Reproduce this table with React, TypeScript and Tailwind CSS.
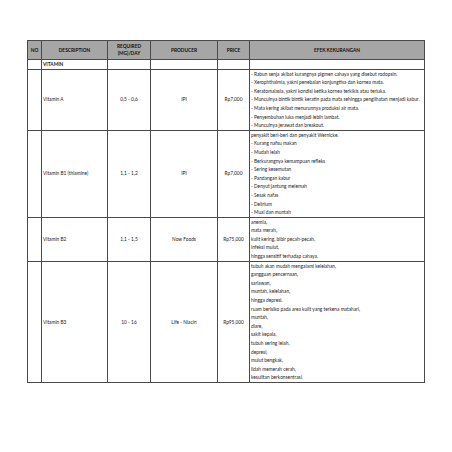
const efekA = [
  "- Rabun senja akibat kurangnya pigmen cahaya yang disebut rodopsin.",
  "- Xerophthalmia, yakni penebalan konjungtiva dan kornea mata.",
  "- Keratomalasia, yakni kondisi ketika kornea terkikis atau terluka.",
  "- Munculnya bintik bintik keratin pada mata sehingga penglihatan menjadi kabur.",
  "- Mata kering akibat menurunnya produksi air mata.",
  "- Penyembuhan luka menjadi lebih lambat.",
  "- Munculnya jerawat dan breakout.",
]

const efekB1 = [
  "penyakit beri-beri dan penyakit Wernicke.",
  "- Kurang nafsu makan",
  "- Mudah lelah",
  "- Berkurangnya kemampuan refleks",
  "- Sering kesemutan",
  "- Pandangan kabur",
  "- Denyut jantung melemah",
  "- Sesak nafas",
  "- Delirium",
  "- Mual dan muntah",
]

const efekB2 = [
  "anemia,",
  "mata merah,",
  "kulit kering, bibir pecah-pecah,",
  "infeksi mulut,",
  "hingga sensitif terhadap cahaya.",
]

const efekB3 = [
  "tubuh akan mudah mengalami kelelahan,",
  "gangguan pencernaan,",
  "sariawan,",
  "muntah, kelelahan,",
  "hingga depresi.",
  "ruam berisiko pada area kulit yang terkena matahari,",
  "muntah,",
  "diare,",
  "sakit kepala,",
  "tubuh sering lelah,",
  "depresi,",
  "mulut bengkak,",
  "lidah memerah cerah,",
  "kesulitan berkonsentrasi.",
]

const rows = [
  { name: "Vitamin A", dose: "0,5 - 0,6", producer: "IPI", price: "Rp7,000", efek: efekA },
  { name: "Vitamin B1 (thiamine)", dose: "1,1 - 1,2", producer: "IPI", price: "Rp7,000", efek: efekB1 },
  { name: "Vitamin B2", dose: "1,1 - 1,5", producer: "Now Foods", price: "Rp75,000", efek: efekB2 },
  { name: "Vitamin B3", dose: "10 - 16", producer: "Life - Niacin", price: "Rp95,000", efek: efekB3 },
]

const cell = "border border-[#4a4a4a] p-0"

export default function App() {
  return (
    <div className="min-h-[452px] w-[452px] bg-white pl-[27px] pt-[40px] font-['Lato','Open_Sans',sans-serif] text-[4.8px] leading-[8.6px] text-[#1c1c1c]">
      <table className="w-[397px] table-fixed border-collapse border-[1.5px] border-[#8c8c8c]">
        <colgroup>
          <col className="w-[14px]" />
          <col className="w-[66px]" />
          <col className="w-[43px]" />
          <col className="w-[67px]" />
          <col className="w-[32px]" />
          <col className="w-[175px]" />
        </colgroup>
        <thead>
          <tr className="h-[19px] bg-[#a6a6a6] font-bold text-[#111]">
            <th className={`${cell} text-center`}>NO</th>
            <th className={`${cell} text-center`}>DESCRIPTION</th>
            <th className={`${cell} text-center leading-[7px]`}>
              REQUIRED
              <br />
              (MG)/DAY
            </th>
            <th className={`${cell} text-center`}>PRODUCER</th>
            <th className={`${cell} text-center`}>PRICE</th>
            <th className={`${cell} text-center`}>EFEK KEKURANGAN</th>
          </tr>
        </thead>
        <tbody>
          <tr className="h-[9px]">
            <td className={cell}></td>
            <td className={`${cell} pl-px font-bold`}>VITAMIN</td>
            <td className={cell}></td>
            <td className={cell}></td>
            <td className={cell}></td>
            <td className={cell}></td>
          </tr>
          {rows.map((r) => (
            <tr key={r.name}>
              <td className={cell}></td>
              <td className={`${cell} pl-px align-middle`}>{r.name}</td>
              <td className={`${cell} text-center align-middle`}>{r.dose}</td>
              <td className={`${cell} text-center align-middle`}>{r.producer}</td>
              <td className={`${cell} text-center align-middle`}>{r.price}</td>
              <td className={`${cell} pl-px align-top whitespace-nowrap`}>
                {r.efek.map((line, i) => (
                  <div key={i}>{line}</div>
                ))}
              </td>
            </tr>
          ))}
        </tbody>
      </table>
    </div>
  )
}
